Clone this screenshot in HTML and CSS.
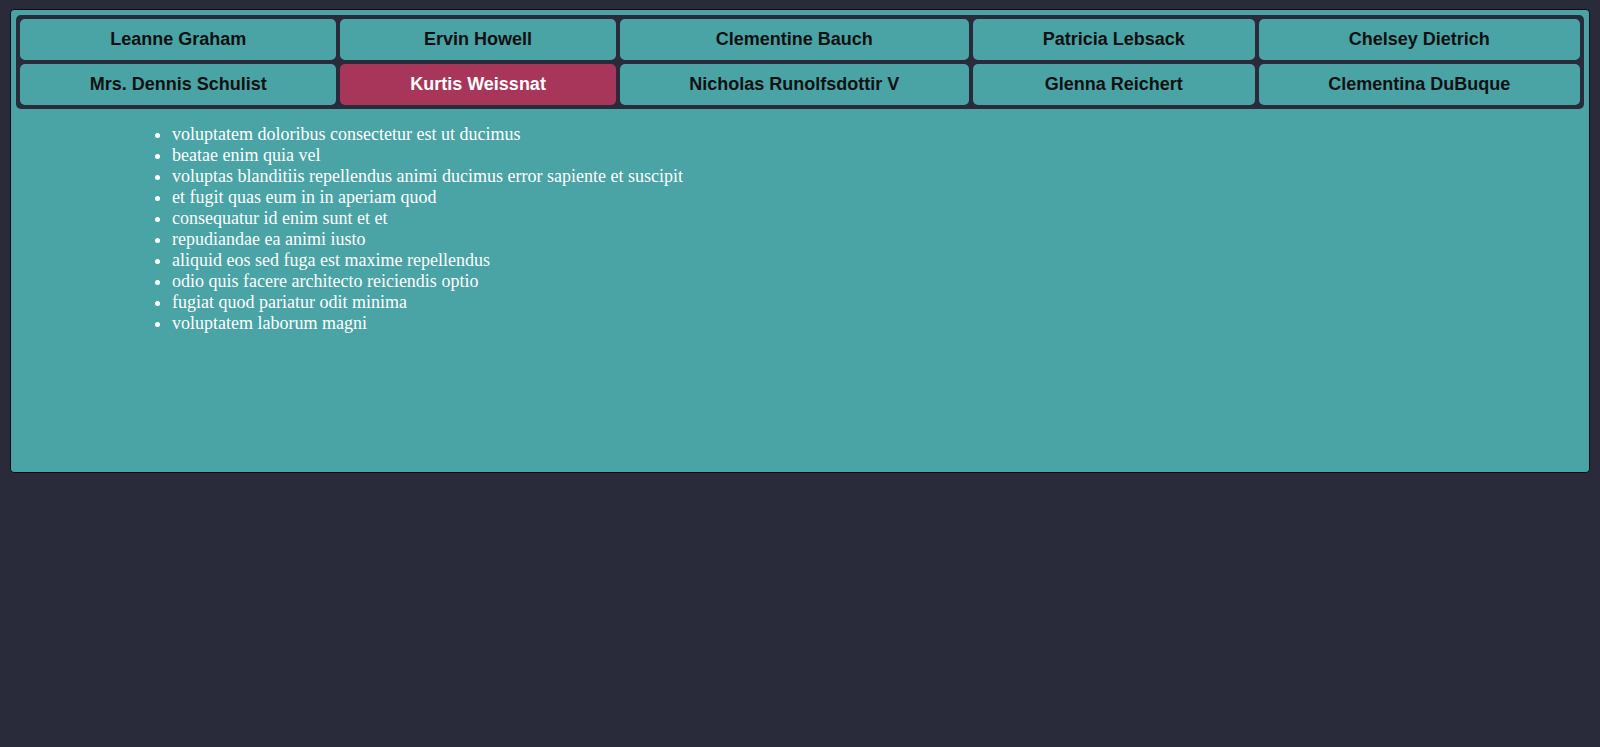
FILE: index.html
```html
<!DOCTYPE html>
<html lang="en">
<head>
<meta charset="utf-8">
<title>Users</title>
<link rel="stylesheet" href="styles.css">
</head>
<body>
<div class="panel">
  <nav class="users">
    <button class="user">Leanne Graham</button>
    <button class="user">Ervin Howell</button>
    <button class="user">Clementine Bauch</button>
    <button class="user">Patricia Lebsack</button>
    <button class="user">Chelsey Dietrich</button>
    <button class="user">Mrs. Dennis Schulist</button>
    <button class="user active">Kurtis Weissnat</button>
    <button class="user">Nicholas Runolfsdottir V</button>
    <button class="user">Glenna Reichert</button>
    <button class="user">Clementina DuBuque</button>
  </nav>
  <div class="content">
    <ul class="todos">
      <li>voluptatem doloribus consectetur est ut ducimus</li>
      <li>beatae enim quia vel</li>
      <li>voluptas blanditiis repellendus animi ducimus error sapiente et suscipit</li>
      <li>et fugit quas eum in in aperiam quod</li>
      <li>consequatur id enim sunt et et</li>
      <li>repudiandae ea animi iusto</li>
      <li>aliquid eos sed fuga est maxime repellendus</li>
      <li>odio quis facere architecto reiciendis optio</li>
      <li>fugiat quod pariatur odit minima</li>
      <li>voluptatem laborum magni</li>
    </ul>
  </div>
</div>
</body>
</html>
```

FILE: styles.css
```css
html, body {
  margin: 0;
  background: #292a3a;
}
body {
  padding: 9px 10px;
  font-family: "Liberation Serif", "Times New Roman", serif;
}
.panel {
  box-sizing: border-box;
  height: 464px;
  background: #4aa3a5;
  border: 1px solid #0d0e14;
  border-radius: 4px;
  padding: 5px;
}
.users {
  display: grid;
  grid-template-columns: repeat(5, auto);
  gap: 4px;
  padding: 4px;
  background: #292a3a;
  border-radius: 5px;
}
.user {
  font-family: "Liberation Sans", Arial, sans-serif;
  font-weight: bold;
  font-size: 18px;
  line-height: 21px;
  padding: 10px 0;
  border: 0;
  border-radius: 5px;
  background: #4aa3a5;
  color: #111;
  text-align: center;
  white-space: nowrap;
}
.user.active {
  background: #a8365a;
  color: #fff;
}
.content {
  padding-left: 116px;
}
.todos {
  margin: 15px 0 0;
  padding-left: 40px;
  color: #fff;
  font-size: 18px;
  line-height: 21px;
}
```
